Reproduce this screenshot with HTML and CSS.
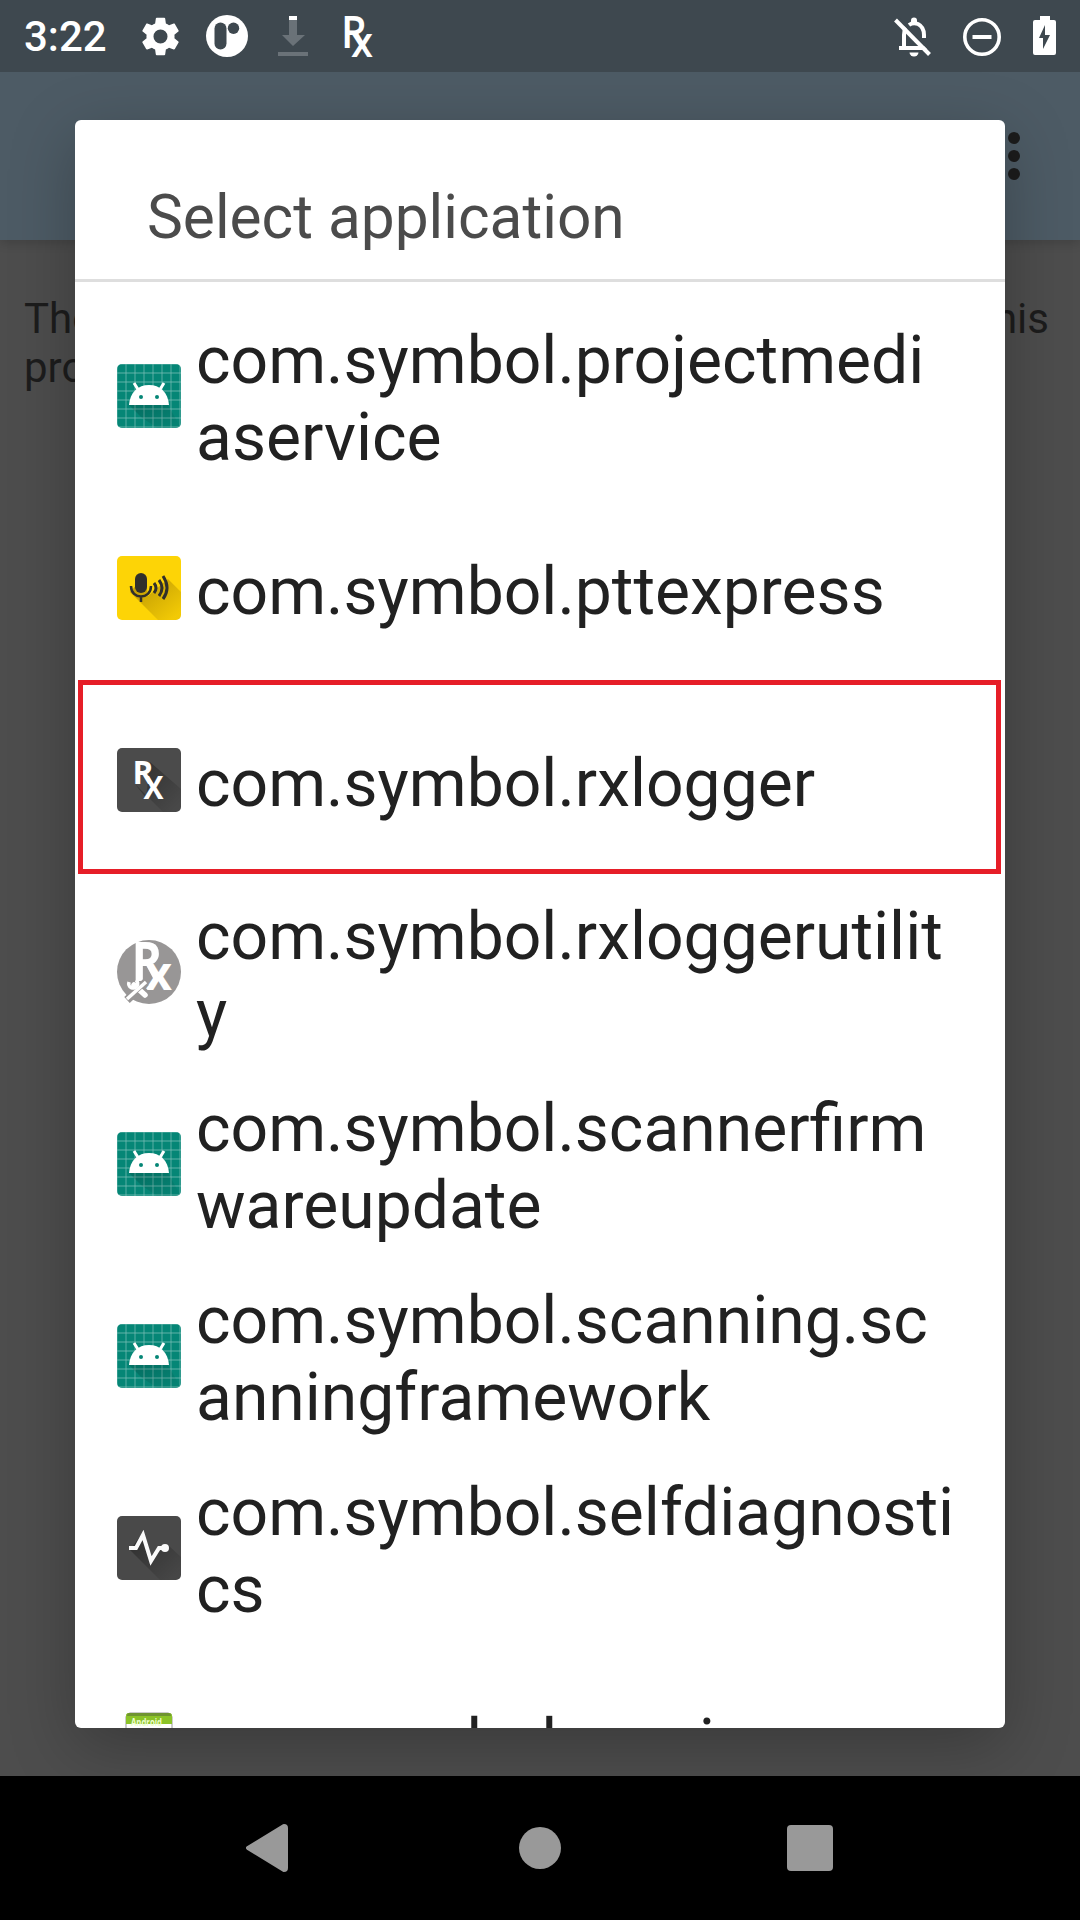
FILE: index.html
```html
<!DOCTYPE html>
<html lang="en">
<head>
<meta charset="utf-8">
<title>Select application</title>
<link rel="stylesheet" href="styles.css">
</head>
<body>
<svg class="defs" width="0" height="0" aria-hidden="true">
  <defs>
    <pattern id="grid" x="0.5" y="0.5" width="9" height="9" patternUnits="userSpaceOnUse">
      <path d="M9 0V9M0 9H9" fill="none" stroke="#7cc0b7" stroke-width="1.4"/>
    </pattern>
    <linearGradient id="fade" x1="0" y1="0" x2="1" y2="1">
      <stop offset="0.2" stop-color="#000" stop-opacity="0.3"/>
      <stop offset="0.9" stop-color="#000" stop-opacity="0.04"/>
    </linearGradient>
    <linearGradient id="gold" x1="0" y1="0" x2="1" y2="1">
      <stop offset="0.2" stop-color="#8a6800" stop-opacity="0.5"/>
      <stop offset="0.9" stop-color="#8a6800" stop-opacity="0.1"/>
    </linearGradient>
    <clipPath id="tile"><rect width="64" height="64" rx="5"/></clipPath>
    <symbol id="android" viewBox="0 0 64 64">
      <g clip-path="url(#tile)">
        <rect width="64" height="64" fill="#058676"/>
        <rect width="64" height="64" fill="url(#grid)"/>
        <path d="M12 41L24 53L40 64H64L51 41Z" fill="url(#fade)" opacity=".5"/>
        <path d="M17 19L22 27M47 19L42 27" stroke="#fff" stroke-width="3"/>
        <path d="M12 41C13 28 21 21 32 21S51 28 52 41Z" fill="#fff"/>
        <circle cx="24" cy="33" r="2" fill="#058676"/><circle cx="40" cy="33" r="2" fill="#058676"/>
      </g>
    </symbol>
  </defs>
</svg>
<div class="screen">
  <header class="status">
    <span class="clock">3:22</span>
    <svg class="gear" viewBox="2 2 20 20" fill="#fff"><path d="M19.14 12.94c.04-.3.06-.61.06-.94 0-.32-.02-.64-.07-.94l2.03-1.58c.18-.14.23-.41.12-.61l-1.92-3.32c-.12-.22-.37-.29-.59-.22l-2.39.96c-.5-.38-1.03-.7-1.62-.94L14.4 2.81c-.04-.24-.24-.41-.48-.41h-3.84c-.24 0-.43.17-.47.41L9.25 5.35c-.59.24-1.13.57-1.62.94L5.24 5.33c-.22-.08-.47 0-.59.22L2.74 8.87c-.12.21-.08.47.12.61l2.03 1.58c-.05.3-.09.63-.09.94s.02.64.07.94l-2.03 1.58c-.18.14-.23.41-.12.61l1.92 3.32c.12.22.37.29.59.22l2.39-.96c.5.38 1.03.7 1.62.94l.36 2.54c.05.24.24.41.48.41h3.84c.24 0 .44-.17.47-.41l.36-2.54c.59-.24 1.13-.56 1.62-.94l2.39.96c.22.08.47 0 .59-.22l1.92-3.32c.12-.22.07-.47-.12-.61zM12 15.6A3.6 3.6 0 1 1 12 8.4a3.6 3.6 0 0 1 0 7.2z"/></svg>
    <svg class="pill" viewBox="0 0 42 42"><circle cx="21" cy="21" r="21" fill="#fff"/><g fill="#3e484f"><rect x="8.5" y="7.5" width="12" height="27" rx="6"/><circle cx="27.5" cy="13.3" r="5.7"/></g></svg>
    <svg class="download" viewBox="0 0 30 40"><g fill="#6a7278"><path d="M11 4h8v15h8L15 30 4 19h7z"/><path d="M0 36h30v4H0z"/></g><path d="M11 0h8v4h-8z" fill="#fff"/></svg>
    <svg class="rx" viewBox="0 0 32 44" fill="#fff"><text x="-3" y="34" font-size="46" textLength="26" lengthAdjust="spacingAndGlyphs" class="glyph medium">R</text><text x="7" y="43" font-size="42" textLength="22" lengthAdjust="spacingAndGlyphs" class="glyph medium">x</text></svg>
    <span class="spacer"></span>
    <svg class="bell" viewBox="0 0 38 40" fill="none" stroke="#fff"><path d="M5 31H33M10 31V18Q10 13 12 10M15 8Q19 5 24 7Q30 10 30 18V21" stroke-width="4"/><path d="M17 3.500a3 3 0 0 1 6 0V6h-6z" fill="#fff" stroke="none"/><path d="M15.500 35.500h9a4.500 4 0 0 1-9 0z" fill="#fff" stroke="none"/><path d="M4.500 1.500L38.500 35.500" stroke="#3e484f" stroke-width="3"/><path d="M1.500 3L35.500 37.500" stroke-width="4"/></svg>
    <svg class="dnd" viewBox="0 0 38 38"><circle cx="19" cy="19" r="17.200" fill="none" stroke="#fff" stroke-width="3.600"/><path d="M9.500 17h19v4h-19z" fill="#fff"/></svg>
    <svg class="battery" viewBox="0 0 23 39"><path d="M7 0h10v4h4a2 2 0 0 1 2 2v31a2 2 0 0 1-2 2H2a2 2 0 0 1-2-2V6a2 2 0 0 1 2-2h5z" fill="#fff"/><path d="M12 9L6 22h4v11l7-14h-5z" fill="#3e484f"/></svg>
  </header>
  <div class="appbar">
    <svg class="more" viewBox="0 0 12 48" fill="#1c1c1c"><circle cx="6" cy="6" r="6"/><circle cx="6" cy="24" r="6"/><circle cx="6" cy="42" r="6"/></svg>
  </div>
  <main class="content">
    <p class="message"><span>There are no applications</span><span>associated with this</span></p>
    <p class="message">profile</p>
  </main>
  <nav class="navbar">
    <svg class="back" viewBox="0 0 42 48"><path d="M38 2L2 24L38 46a2 2 0 0 0 2-2V4a2 2 0 0 0-2-2z" fill="#999" stroke="#999" stroke-width="4" stroke-linejoin="round"/></svg>
    <span class="home"></span>
    <span class="recent"></span>
  </nav>

  <section class="dialog">
    <h1 class="title">Select application</h1>
    <ul class="list">
      <li class="row"><svg class="icon"><use href="#android"/></svg><span>com.symbol.projectmedi<br>aservice</span></li>
      <li class="row">
        <svg class="icon" viewBox="0 0 64 64"><g clip-path="url(#tile)"><rect width="64" height="64" fill="#fdd406"/><path d="M13 36L41 64H64V36L51 23L31 40L28 20Z" fill="url(#gold)"/><rect x="18" y="17" width="12" height="20" rx="6" fill="#302f2b"/><g fill="none" stroke="#302f2b"><path d="M14 30C14 44 34 44 34 30M24 40V46" stroke-width="2.500"/><path d="M37 27Q41 32 37 37M42 24Q48 32 42 40M46 20Q54 32 46 43" stroke-width="3"/></g></g></svg>
        <span>com.symbol.pttexpress</span></li>
      <li class="row selected">
        <svg class="icon" viewBox="0 0 64 64"><g clip-path="url(#tile)"><rect width="64" height="64" fill="#4b4b4b"/><path d="M18 36L46 64H64V41L33 14L29 50Z" fill="url(#fade)"/></g><g fill="#fff"><text x="15.500" y="36" font-size="32" textLength="21" lengthAdjust="spacingAndGlyphs" class="glyph bold">R</text><text x="26.500" y="51" font-size="33" textLength="20" lengthAdjust="spacingAndGlyphs" class="glyph bold">X</text></g></svg>
        <span>com.symbol.rxlogger</span></li>
      <li class="row">
        <svg class="icon" viewBox="0 0 64 64"><circle cx="32" cy="32" r="32" fill="#989696"/><g fill="#fff"><text x="14.500" y="41" font-size="53" textLength="31" lengthAdjust="spacingAndGlyphs" class="glyph bold">R</text><text x="28" y="50" font-size="47" textLength="27" lengthAdjust="spacingAndGlyphs" class="glyph bold">x</text></g><path d="M19 44L30 55M10 60L29 42" stroke="#989696" stroke-width="8"/><path d="M17 45L28 55" stroke="#fff" stroke-width="5.500" stroke-linecap="round"/><path d="M10 59L29 42" stroke="#989696" stroke-width="5"/><path d="M10 59L29 42" stroke="#fff" stroke-width="3.500"/><path d="M12 42A4.500 4.500 0 1 0 19 40" fill="none" stroke="#fff" stroke-width="3.500"/></svg>
        <span>com.symbol.rxloggerutilit<br>y</span></li>
      <li class="row"><svg class="icon"><use href="#android"/></svg><span>com.symbol.scannerfirm<br>wareupdate</span></li>
      <li class="row"><svg class="icon"><use href="#android"/></svg><span>com.symbol.scanning.sc<br>anningframework</span></li>
      <li class="row">
        <svg class="icon" viewBox="0 0 64 64"><g clip-path="url(#tile)"><rect width="64" height="64" fill="#494949"/><path d="M13 34L43 64H64V41L51 29L34 42L26 16Z" fill="url(#fade)"/></g><path d="M12 32H19L26 19L34 45L42 32H48" fill="none" stroke="#fafafa" stroke-width="4"/><circle cx="48" cy="32" r="4" fill="#fafafa"/></svg>
        <span>com.symbol.selfdiagnosti<br>cs</span></li>
      <li class="row">
        <svg class="icon" viewBox="0 0 64 64"><rect x="9" y="5" width="46" height="55" rx="4" fill="#fff" stroke="#999" stroke-width="1"/><path d="M9 16V8q0-3 3-3H52q3 0 3 3V16z" fill="#8bc327"/><path d="M10 8q0-3 3-3H51q3 0 3 3z" fill="#6f9430"/><text x="14" y="17.500" font-size="10" textLength="31" lengthAdjust="spacingAndGlyphs" fill="#efffd0" class="glyph bold">Android</text></svg>
        <span>com.symbol.service</span></li>
    </ul>
  </section>
</div>
</body>
</html>
```
FILE: styles.css
```css
*, *::after { box-sizing: border-box; margin: 0; padding: 0; }
body { width: 1080px; height: 1920px; overflow: hidden; font-family: Roboto, sans-serif; }
.defs { position: absolute; }
.glyph { font-family: "Open Sans", sans-serif; }
.medium { font-weight: 600; }
.bold { font-weight: 700; }
.screen { position: relative; width: 1080px; height: 1920px; display: flex; flex-direction: column; background: #4d4d4d; overflow: hidden; }

.status { position: relative; z-index: 2; height: 72px; background: #3e484f; display: flex; align-items: flex-start; padding: 0 24px 0 24px; }
.status svg { flex: none; display: block; }
.clock { color: #fff; font-size: 42px; font-weight: 500; line-height: 50px; margin-top: 12px; width: 117px; }
.gear { width: 39px; height: 39px; margin-top: 16.5px; }
.pill { width: 42px; height: 42px; margin: 15px 0 0 26px; }
.download { width: 30px; height: 40px; margin: 16px 0 0 30px; }
.rx { width: 32px; height: 44px; margin: 14px 0 0 36px; overflow: visible; }
.spacer { flex: 1; }
.bell { width: 38px; height: 40px; margin: 17px 31px 0 0; }
.dnd { width: 38px; height: 38px; margin: 18px 32px 0 0; }
.battery { width: 23px; height: 39px; margin-top: 16px; }

.appbar { height: 168px; background: #4d5b65; display: flex; justify-content: flex-end; align-items: flex-start; padding: 60px 60px 0 0; box-shadow: 0 3px 10px rgba(0, 0, 0, .15); }
.more { width: 12px; height: 48px; }
.content { flex: 1; padding: 54px 31px 0 24px; }
.message { display: flex; justify-content: space-between; color: #1c1c1c; font-size: 42px; line-height: 49px; white-space: nowrap; }

.navbar { position: relative; z-index: 2; height: 144px; background: #000; display: flex; align-items: center; justify-content: space-between; padding: 0 247px 0 246px; }
.back { width: 42px; height: 48px; }
.home { width: 42px; height: 42px; margin-left: 4px; border-radius: 50%; background: #999; }
.recent { width: 46px; height: 46px; border-radius: 4px; background: #999; }

.dialog { position: absolute; z-index: 1; left: 75px; top: 120px; width: 930px; height: 1608px; background: #fff; border-radius: 6px; overflow: hidden; box-shadow: 0 18px 65px rgba(0, 0, 0, .25); }
.title { height: 162px; padding: 63px 0 0 72px; border-bottom: 3px solid #dedede; color: #4b4b4b; font-size: 60.4px; font-weight: 400; line-height: 70px; }
.list { list-style: none; padding-top: 18px; }
.row { position: relative; height: 192px; display: flex; align-items: center; gap: 15px; padding-left: 42px; color: #212121; font-size: 66px; line-height: 77px; white-space: nowrap; }
.row span { padding-top: 6px; }
.icon { width: 64px; height: 64px; flex: none; overflow: visible; }
.selected::after { content: ""; position: absolute; left: 3px; top: -4px; width: 923px; height: 194px; border: 5px solid #e61e28; }
```
